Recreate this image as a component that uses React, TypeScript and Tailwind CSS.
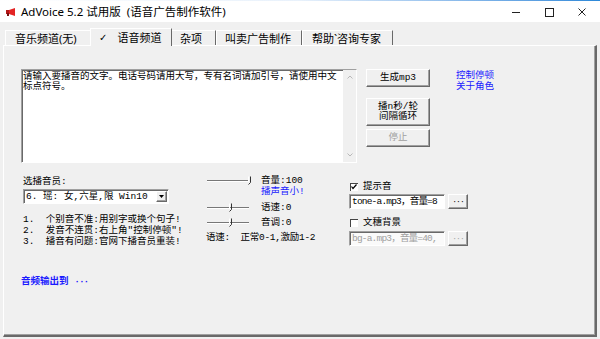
import React from "react";

const cjk = "font-['Liberation_Mono','Noto_Sans_CJK_SC',monospace]";
const ui = "font-['Noto_Sans','Noto_Sans_CJK_SC',sans-serif]";
const raised = "border border-t-white border-l-white border-r-[#696969] border-b-[#696969] shadow-[inset_-1px_-1px_#a0a0a0] bg-[#f0f0f0]";
const sunken = "border border-t-[#a0a0a0] border-l-[#a0a0a0] border-r-white border-b-white shadow-[inset_1px_1px_#696969]";

const Megaphone = () => (
  <svg width="10" height="8" viewBox="0 0 10 8">
    <path d="M3 2 L9 0 L9 8 L3 6 Z" fill="#e32424" />
    <rect x="0" y="2" width="3" height="4" fill="#b31818" />
    <rect x="1" y="5" width="2" height="3" fill="#7a1010" />
  </svg>
);

const Slider = ({ pos }: { pos: number }) => (
  <svg width="46" height="10" viewBox="0 0 46 10" className="block">
    <line x1="0" y1="4.5" x2="42" y2="4.5" stroke="#777" strokeWidth="1" />
    <line x1="0" y1="5.5" x2="42" y2="5.5" stroke="#fff" strokeWidth="1" />
    <path d={`M${pos + 2.5} 0.5 V6.5 L${pos + 0.5} 8.5`} fill="none" stroke="#333" strokeWidth="1" />
    <path d={`M${pos + 0.5} 0.5 V5`} fill="none" stroke="#fff" strokeWidth="1" />
  </svg>
);

const CheckBox = ({ checked }: { checked?: boolean }) => (
  <div className="w-[8px] h-[8px] bg-white shadow-[inset_1px_1px_#444] flex items-center justify-center">
    {checked && (
      <svg width="6" height="6" viewBox="0 0 6 6">
        <path d="M0.5 2.5 L2 4.5 L5.5 0.5" fill="none" stroke="#000" strokeWidth="1.2" />
      </svg>
    )}
  </div>
);

const Dots = ({ gray }: { gray?: boolean }) => (
  <button className={`w-[20px] h-[15px] ${raised} flex items-center justify-center ${gray ? "text-[#a0a0a0]" : "text-black"} text-[8px] leading-none tracking-[-1px]`}>
    ···
  </button>
);

export default function App() {
  return (
    <div className={`w-[600px] h-[339px] bg-[#f0f0f0] flex flex-col overflow-hidden ${ui}`}>
      {/* title bar */}
      <div className="h-[22px] bg-white flex flex-col shrink-0">
        <div className="h-px bg-gradient-to-r from-white via-[#e8f1fb] to-[#2b88d8]" />
        <div className="flex items-center h-[21px]">
          <div className="ml-[6px] mr-[5px]">
            <Megaphone />
          </div>
          <span className="text-[11.5px] leading-none text-black">AdVoice 5.2 试用版&nbsp;&nbsp;(语音广告制作软件)</span>
          <div className="ml-auto flex items-center h-full">
            <div className="w-[33px] flex justify-center">
              <svg width="10" height="10" viewBox="0 0 10 10"><line x1="1" y1="5.5" x2="9" y2="5.5" stroke="#222" /></svg>
            </div>
            <div className="w-[33px] flex justify-center">
              <svg width="10" height="10" viewBox="0 0 10 10"><rect x="1.5" y="1.5" width="8" height="8" fill="none" stroke="#222" /></svg>
            </div>
            <div className="w-[33px] flex justify-center mr-[2px]">
              <svg width="10" height="10" viewBox="0 0 10 10"><path d="M1.5 1.5 L8.5 8.5 M8.5 1.5 L1.5 8.5" stroke="#222" /></svg>
            </div>
          </div>
        </div>
      </div>

      {/* tabs */}
      <div className="h-[23px] flex items-end pl-[5px] text-[11px] text-black shrink-0 relative z-10">
        <div className="w-[85px] h-[15px] border-t border-l border-white flex items-center pl-[9px] leading-none">音乐频道(无)</div>
        <div className="w-[82px] h-[18px] -mb-px bg-[#f0f0f0] border-t border-l border-white border-r border-r-[#696969] flex items-center pl-[8px] leading-none">
          <span className="font-['DejaVu_Sans'] text-[10px] mr-[10px]">✓</span>语音频道
        </div>
        <div className="w-[44px] h-[15px] border-t border-white border-r border-r-[#696969] flex items-center pl-[8px] leading-none">杂项</div>
        <div className="w-[86px] h-[15px] border-t border-l border-white border-r border-r-[#696969] flex items-center pl-[8px] leading-none">叫卖广告制作</div>
        <div className="w-[91px] h-[15px] border-t border-l border-white border-r border-r-[#696969] flex items-center pl-[9px] leading-none">帮助`咨询专家</div>
      </div>

      {/* panel */}
      <div className="ml-[3px] w-[594px] h-[292px] border-t border-l border-white border-r-2 border-b-2 border-r-[#696969] border-b-[#696969] shrink-0">
        <div className={`h-full border-r border-b border-[#a0a0a0] pl-[17px] pt-[23px] text-[9.5px] text-black ${cjk}`}>
          {/* row 1 */}
          <div className="flex items-start">
            <div className={`w-[336px] h-[94px] bg-white ${sunken} flex`}>
              <div className="flex-1 pl-[1px] pt-[2px] leading-[10px]">
                请输入要播音的文字。电话号码请用大写，专有名词请加引号，请使用中文<br />标点符号。
              </div>
              <div className="w-[13px] bg-[#f0f0f0] flex flex-col items-center justify-between py-[5px]">
                <svg width="6" height="4" viewBox="0 0 6 4"><path d="M0.5 3.5 L3 1 L5.5 3.5" fill="none" stroke="#b8b8b8" /></svg>
                <svg width="6" height="4" viewBox="0 0 6 4"><path d="M0.5 0.5 L3 3 L5.5 0.5" fill="none" stroke="#b8b8b8" /></svg>
              </div>
            </div>
            <div className="ml-[9px] w-[64px] flex flex-col">
              <button className={`h-[18px] ${raised} leading-none`}>生成mp3</button>
              <button className={`mt-[11px] h-[28px] ${raised} leading-[10px]`}>播n秒/轮<br />间隔循环</button>
              <button className={`mt-[3px] h-[18px] ${raised} leading-none text-[#a0a0a0]`}>停止</button>
            </div>
            <div className="ml-[26px] pt-[1px] leading-[11px] text-[#1a1aff]">
              <div>控制停顿</div>
              <div>关于角色</div>
            </div>
          </div>

          {/* row 2 */}
          <div className="mt-[14px] h-[68px] flex items-start">
            {/* left */}
            <div className="ml-[2px] w-[183px] flex flex-col">
              <div className="leading-[10px]">选播音员:</div>
              <div className={`mt-[2px] w-[146px] h-[15px] bg-white ${sunken} flex items-center`}>
                <span className="flex-1 pl-[2px] leading-none whitespace-pre">6. 瑶: 女,六星,限 Win10</span>
                <div className={`w-[11px] h-[11px] mr-px ${raised} flex items-center justify-center`}>
                  <svg width="5" height="3" viewBox="0 0 5 3"><path d="M0 0 H5 L2.5 3 Z" fill="#000" /></svg>
                </div>
              </div>
              <div className="mt-[10px] leading-[11px] whitespace-pre">
                <div>1.  个别音不准:用别字或换个句子!</div>
                <div>2.  发音不连贯:右上角"控制停顿"!</div>
                <div>3.  播音有问题:官网下播音员重装!</div>
              </div>
            </div>

            {/* middle */}
            <div className="w-[143px] -mt-[2px] flex flex-col">
              <div className="flex items-start">
                <div className="w-[55px] h-[11px] flex items-center pl-[1px]">
                  <Slider pos={41} />
                </div>
                <div className="leading-[11px]">
                  <div>音量:100</div>
                  <div className="text-[#1a1aff]">播声音小!</div>
                </div>
              </div>
              <div className="mt-[6px] flex items-center h-[10px]">
                <div className="w-[55px] pl-[1px]"><Slider pos={22} /></div>
                <span className="leading-none">语速:0</span>
              </div>
              <div className="mt-[5px] flex items-center h-[10px]">
                <div className="w-[55px] pl-[1px]"><Slider pos={22} /></div>
                <span className="leading-none">音调:0</span>
              </div>
              <div className="mt-[5px] leading-[10px] whitespace-pre tracking-[-0.3px]">语速:  正常0-1,激励1-2</div>
            </div>

            {/* right */}
            <div className="flex flex-col">
              <div className="mt-[5px] h-[10px] flex items-center">
                <div className="ml-px"><CheckBox checked /></div>
                <span className="ml-[5px] leading-none">提示音</span>
              </div>
              <div className="mt-[2px] flex items-center">
                <div className={`w-[96px] h-[15px] bg-white ${sunken} flex items-center pl-[2px] leading-none whitespace-nowrap overflow-hidden tracking-[-0.8px]`}>tone-a.mp3，音量=8</div>
                <div className="ml-[3px]"><Dots /></div>
              </div>
              <div className="mt-[9px] h-[10px] flex items-center">
                <div className="ml-px"><CheckBox /></div>
                <span className="ml-[5px] leading-none">文穗背景</span>
              </div>
              <div className="mt-[3px] flex items-center">
                <div className={`w-[96px] h-[15px] bg-[#fafafa] ${sunken} flex items-center pl-[2px] leading-none whitespace-nowrap overflow-hidden text-[#a0a0a0] tracking-[-0.8px]`}>bg-a.mp3，音量=40,</div>
                <div className="ml-[3px]"><Dots gray /></div>
              </div>
            </div>
          </div>

          {/* bottom link */}
          <div className="mt-[32px] leading-[10px] font-bold text-[#1a1aff]">
            音频输出到 <span className="tracking-[-1px]">···</span>
          </div>
        </div>
      </div>
    </div>
  );
}
